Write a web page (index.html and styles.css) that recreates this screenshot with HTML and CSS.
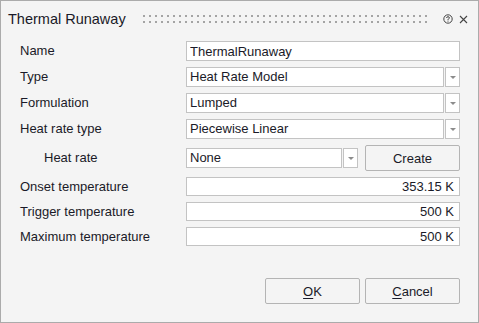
FILE: index.html
```html
<!DOCTYPE html>
<html>
<head>
<meta charset="utf-8">
<link rel="stylesheet" href="styles.css">
</head>
<body>
<div class="window">
  <div class="titlebar">
    <span class="title">Thermal Runaway</span>
    <svg class="grip" height="8" xmlns="http://www.w3.org/2000/svg">
      <defs>
        <pattern id="dots" width="6" height="8" patternUnits="userSpaceOnUse">
          <rect x="0" y="0" width="2" height="2" fill="#a4a4a4"/>
          <rect x="0" y="6" width="2" height="2" fill="#a4a4a4"/>
        </pattern>
      </defs>
      <rect x="0" y="0" width="100%" height="8" fill="url(#dots)"/>
    </svg>
    <svg class="help" width="10" height="10" viewBox="0 0 10 10" xmlns="http://www.w3.org/2000/svg">
      <circle cx="5" cy="5" r="4.2" fill="none" stroke="#444" stroke-width="1"/>
      <path d="M3.6 4 Q3.6 2.7 5 2.7 Q6.4 2.7 6.4 3.9 Q6.4 4.7 5.4 5 Q5 5.2 5 5.9" fill="none" stroke="#444" stroke-width="1"/>
      <rect x="4.5" y="6.6" width="1" height="1" fill="#444"/>
    </svg>
    <svg class="close" width="9" height="9" viewBox="0 0 9 9" xmlns="http://www.w3.org/2000/svg">
      <path d="M1 1 L8 8 M8 1 L1 8" stroke="#444" stroke-width="1.1" fill="none"/>
    </svg>
  </div>

  <div class="form">
    <label class="lbl">Name</label>
    <input class="field" value="ThermalRunaway">

    <label class="lbl">Type</label>
    <div class="select"><div class="sel-box">Heat Rate Model</div><div class="sel-btn"><span class="arrow"></span></div></div>

    <label class="lbl">Formulation</label>
    <div class="select"><div class="sel-box">Lumped</div><div class="sel-btn"><span class="arrow"></span></div></div>

    <label class="lbl">Heat rate type</label>
    <div class="select"><div class="sel-box">Piecewise Linear</div><div class="sel-btn"><span class="arrow"></span></div></div>

    <label class="lbl indent">Heat rate</label>
    <div class="hr-row">
      <div class="select short"><div class="sel-box">None</div><div class="sel-btn"><span class="arrow"></span></div></div>
      <button class="btn create">Create</button>
    </div>

    <label class="lbl">Onset temperature</label>
    <input class="field num" value="353.15 K">

    <label class="lbl">Trigger temperature</label>
    <input class="field num" value="500 K">

    <label class="lbl">Maximum temperature</label>
    <input class="field num" value="500 K">
  </div>

  <div class="footer">
    <button class="btn"><u>O</u>K</button>
    <button class="btn"><u>C</u>ancel</button>
  </div>
</div>
</body>
</html>
```

FILE: styles.css
```css
html, body {
  margin: 0;
  padding: 0;
  background: #ffffff;
}

body {
  font-family: "Liberation Sans", Arial, sans-serif;
  font-size: 13px;
  color: #1a1a28;
}

.window {
  width: 479px;
  height: 323px;
  box-sizing: border-box;
  border: 1px solid #ababab;
  background: #f4f4f4;
  display: flex;
  flex-direction: column;
}

.titlebar {
  height: 34px;
  box-sizing: border-box;
  padding: 2px 10px 0 7px;
  display: flex;
  align-items: center;
}

.title {
  font-size: 14.5px;
  line-height: 17px;
  white-space: nowrap;
}

.grip {
  flex: 1;
  margin-left: 17px;
  margin-right: 16px;
}

.help {
  margin-right: 6px;
}

.form {
  padding: 6px 18px 0 19px;
  display: grid;
  grid-template-columns: 166px 1fr;
  grid-template-rows: 20px 20px 20px 20px 26px 19px 19px 19px;
  row-gap: 6px;
  align-items: center;
}

.lbl {
  line-height: 16px;
  white-space: nowrap;
}

.indent {
  padding-left: 24px;
}

.field {
  font: inherit;
  color: inherit;
  height: 100%;
  width: 100%;
  box-sizing: border-box;
  margin: 0;
  border: 1px solid #c3c3c3;
  background: #ffffff;
  padding: 0 3px;
  outline: none;
}

.field.num {
  text-align: right;
  padding-right: 5px;
}

.select {
  display: flex;
  height: 20px;
  gap: 1px;
}

.sel-box {
  flex: 1;
  box-sizing: border-box;
  border: 1px solid #c3c3c3;
  background: #ffffff;
  padding: 0 3px;
  line-height: 18px;
  white-space: nowrap;
}

.sel-btn {
  width: 15px;
  box-sizing: border-box;
  border: 1px solid #c3c3c3;
  background: #ffffff;
  display: flex;
  align-items: center;
  justify-content: center;
}

.arrow {
  width: 0;
  height: 0;
  border-left: 3px solid transparent;
  border-right: 3px solid transparent;
  border-top: 3px solid #8c8c8c;
}

.hr-row {
  display: flex;
  align-items: center;
  justify-content: space-between;
  height: 26px;
}

.select.short {
  width: 172px;
}

.btn {
  font: inherit;
  color: inherit;
  width: 95px;
  height: 26px;
  box-sizing: border-box;
  border: 1px solid #b4b4b4;
  border-radius: 2px;
  background: #f4f4f4;
  padding: 0;
  margin: 0;
}

.btn u {
  text-decoration-thickness: 1px;
  text-underline-offset: 2px;
}

.footer {
  margin-top: auto;
  padding: 0 18px 18px 0;
  display: flex;
  justify-content: flex-end;
  gap: 5px;
}
```
